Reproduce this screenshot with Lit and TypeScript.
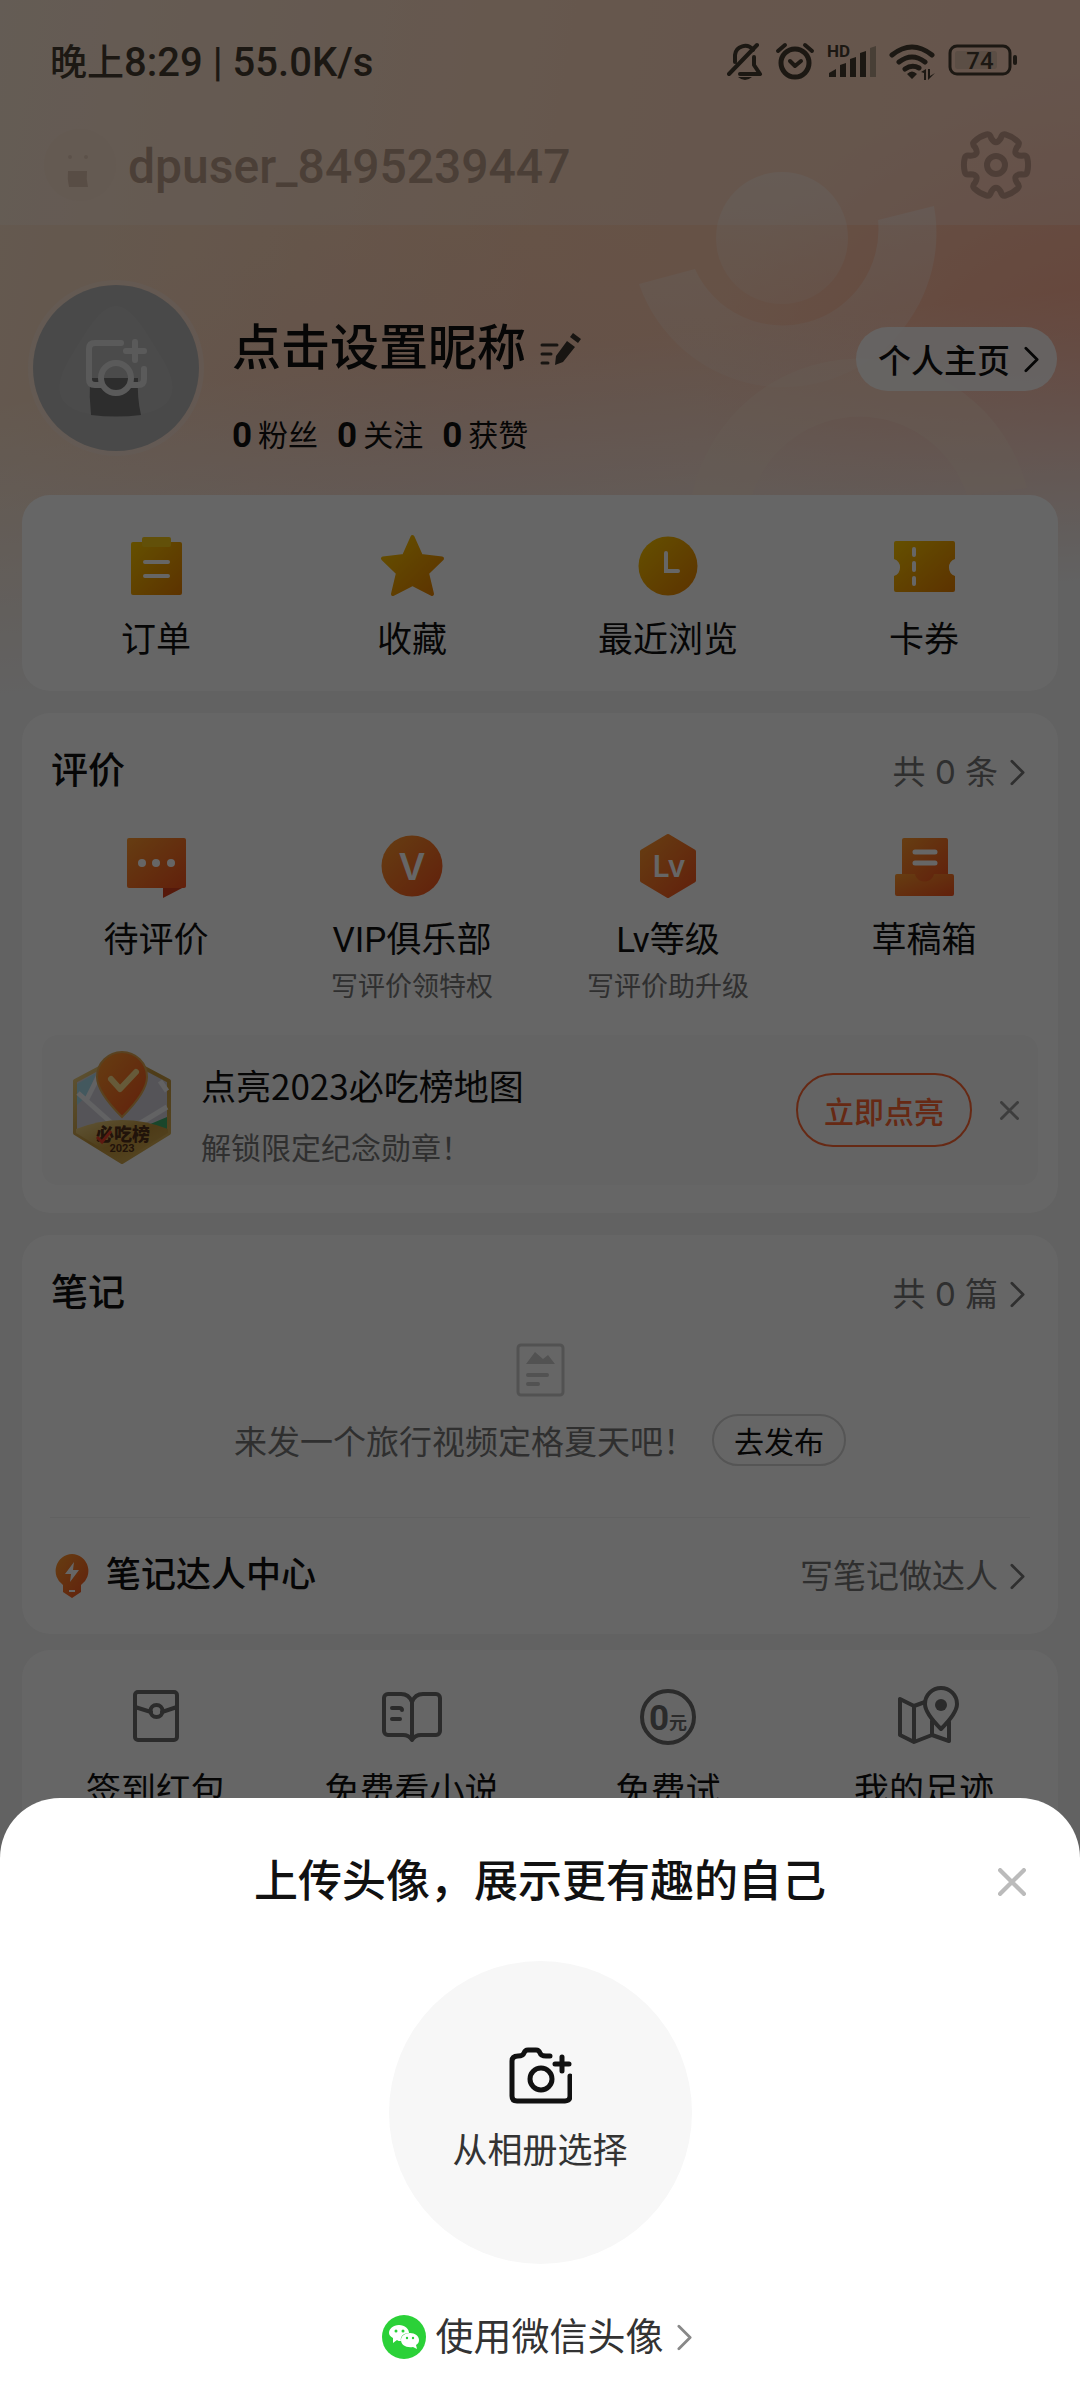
import { LitElement, html, svg, css, nothing } from "lit";
import type { TemplateResult, SVGTemplateResult } from "lit";
import { customElement, state } from "lit/decorators.js";

interface Entry {
  icon: SVGTemplateResult;
  label: string;
  note?: string;
}

const point = (radius: number, degrees: number): string => {
  const a = (degrees * Math.PI) / 180;
  return `${(36 + radius * Math.cos(a)).toFixed(2)} ${(36 + radius * Math.sin(a)).toFixed(2)}`;
};

/** Outline of a cog with six lobes, one every 60 degrees. */
const gearPath =
  [0, 60, 120, 180, 240, 300]
    .map(
      (a, i) =>
        `${i === 0 ? "M" : "L"}${point(32, a - 13)} Q${point(33, a)} ${point(32, a + 13)} ` +
        `Q${point(32, a + 19)} ${point(27, a + 20)} Q${point(19, a + 30)} ${point(27, a + 40)} ` +
        `Q${point(32, a + 41)} ${point(32, a + 47)}`,
    )
    .join(" ") + "Z";

const orders = svg`
  <rect x="7" y="8" width="51" height="53" rx="2" fill="url(#gold)"/>
  <rect x="18" y="3" width="29" height="10" rx="2" fill="#f5c818"/>
  <path d="M21 28h23M21 42h23" stroke="#fff" stroke-width="4" stroke-linecap="round"/>`;
const star = svg`
  <path d="M32.500 3 L41 22 L62 24.500 L47 39 L52 60 L32.500 50 L13 60 L18 39 L3 24.500 L24 22Z"
    fill="url(#gold)" stroke="url(#gold)" stroke-width="4" stroke-linejoin="round"/>`;
const clock = svg`
  <circle cx="32" cy="32" r="29.500" fill="url(#gold)"/>
  <path d="M30 19v18h12" fill="none" stroke="#fff" stroke-width="4" stroke-linecap="round"/>`;
const ticket = svg`
  <path d="M4 7H61a2 2 0 0 1 2 2V25a9 9 0 0 0 0 17V56a2 2 0 0 1-2 2H4a2 2 0 0 1-2-2V42a9 9 0 0 0 0-17V9a2 2 0 0 1 2-2Z" fill="url(#gold)"/>
  <path d="M22 15v6M22 29v7M22 44v6" stroke="#fff" stroke-width="4" stroke-linecap="round"/>`;
const comment = svg`
  <path d="M39 50V64L62 52Z" fill="#d8401c"/>
  <rect x="3" y="4" width="59" height="50" rx="2" fill="url(#flame)"/>
  <g fill="#fff"><circle cx="18" cy="29" r="4"/><circle cx="32" cy="29" r="4"/><circle cx="47" cy="29" r="4"/></g>`;
const vip = svg`
  <circle cx="32" cy="32" r="30.500" fill="url(#flame)"/>
  <text class="glyph" x="32" y="46" font-size="37" text-anchor="middle">V</text>`;
const level = svg`
  <path d="M32 2 L58 17.500V46.500L32 62 L6 46.500V17.500Z" fill="url(#flame)" stroke="url(#flame)" stroke-width="4" stroke-linejoin="round"/>
  <text class="glyph" x="33" y="43" font-size="30" text-anchor="middle">Lv</text>`;
const drafts = svg`
  <rect x="10" y="4" width="46" height="44" rx="2" fill="url(#flame)"/>
  <path d="M23 18h20M23 29h20" stroke="#fff" stroke-width="5" stroke-linecap="round"/>
  <path d="M5 40H23C25 50 40 50 42 40H60a2 2 0 0 1 2 2V60a2 2 0 0 1-2 2H5a2 2 0 0 1-2-2V42a2 2 0 0 1 2-2Z" fill="url(#flame)"/>`;

const envelope = svg`
  <g class="line"><rect x="11" y="7" width="42" height="48" rx="3"/>
  <path d="M11 22l16 5M53 22l-15 5"/><circle cx="32.500" cy="26" r="6"/></g>`;
const book = svg`
  <g class="line"><path d="M32 17Q29 9 21 9H8a4 4 0 0 0-4 4V46a4 4 0 0 0 4 4H23Q29 50 32 55Q35 50 41 50H56a4 4 0 0 0 4-4V13a4 4 0 0 0-4-4H43Q35 9 32 17V53"/>
  <path d="M12 23h7q3 0 3 2M12 34h8"/></g>`;
const zero = svg`
  <circle class="line" cx="32" cy="32" r="26"/>
  <text class="ink" x="13" y="45" font-size="35">0</text>
  <text class="ink" x="33" y="44" font-size="18">元</text>`;
const map = svg`
  <g class="line"><path d="M33 17L22 21L8 14V50L22 57L40 50L57 56V37M22 21V57M40 50V36"/>
  <path d="M49 44Q33 28 33 19a16 16 0 0 1 32 0Q65 28 49 44Z"/></g>
  <circle cx="49" cy="20" r="6" fill="#6b6b6b"/>`;

const shortcuts: Entry[] = [
  { icon: orders, label: "订单" },
  { icon: star, label: "收藏" },
  { icon: clock, label: "最近浏览" },
  { icon: ticket, label: "卡券" },
];
const reviews: Entry[] = [
  { icon: comment, label: "待评价" },
  { icon: vip, label: "VIP俱乐部", note: "写评价领特权" },
  { icon: level, label: "Lv等级", note: "写评价助升级" },
  { icon: drafts, label: "草稿箱" },
];
const services: Entry[] = [
  { icon: envelope, label: "签到红包" },
  { icon: book, label: "免费看小说" },
  { icon: zero, label: "免费试" },
  { icon: map, label: "我的足迹" },
];

const chevron = html`<svg class="chevron" viewBox="0 0 16 28" aria-hidden="true"><path d="M2 2l12 12-12 12"/></svg>`;
const cross = html`<svg class="cross" viewBox="0 0 26 26" aria-hidden="true"><path d="M2 2l22 22M24 2l-22 22"/></svg>`;

@customElement("app-root")
export class AppRoot extends LitElement {
  @state() private sheetOpen = true;
  @state() private promoOpen = true;

  static styles = css`
    :host {
      display: block;
      font-family: Roboto, "Noto Sans CJK SC", sans-serif;
      color: #111;
    }
    * { box-sizing: border-box; }
    a { color: inherit; text-decoration: none; }
    button { font: inherit; color: inherit; background: none; border: 0; padding: 0; margin: 0; cursor: pointer; }
    h1, h2, h3, p { margin: 0; font-weight: 400; }
    svg { display: block; flex: none; }
    .screen { position: relative; min-height: 100vh; overflow: hidden; }
    .page {
      min-height: 100vh;
      background:
        linear-gradient(174deg, rgba(244, 244, 244, 0) 400px, #f4f4f4 690px) no-repeat,
        radial-gradient(ellipse 420px 330px at 104% 400px, rgba(255, 160, 135, 0.75), rgba(255, 170, 145, 0)) no-repeat,
        radial-gradient(ellipse 480px 280px at 46% 470px, rgba(250, 200, 184, 0.7), rgba(250, 200, 184, 0)) no-repeat,
        linear-gradient(100deg, #fadfc8 0, #ffd0b0 48%, #ffc6ac 100%) no-repeat,
        #f4f4f4;
      background-size: 100% 760px, 100% 760px, 100% 760px, 100% 720px, auto;
    }
    .figure { position: absolute; top: 0; right: 0; width: 480px; height: 495px; }

    .status {
      position: absolute;
      top: 0;
      left: 0;
      right: 0;
      z-index: 2;
      display: flex;
      align-items: center;
      justify-content: space-between;
      height: 120px;
      padding: 0 62px 0 50px;
      font-size: 40px;
      font-weight: 500;
      color: #1c1813;
    }
    .status-cn { font-size: 37px; }
    .status-icons { display: flex; align-items: center; gap: 12px; }
    .status-icons svg { height: 40px; fill: none; stroke: #1c1813; stroke-width: 5; stroke-linecap: round; stroke-linejoin: round; }
    .status-icons text, .status-icons .solid { fill: #1c1813; stroke: none; }
    .status-icons .faint { fill: #483f36; stroke: none; }
    .status-icons .charge { fill: #5b4e45; stroke: none; }
    .bar { position: relative; display: flex; align-items: center; gap: 12px; height: 225px; padding: 122px 46px 17px 44px; background: rgba(255, 255, 255, 0.22); color: #bb9e8a; }
    .bar-name { flex: 1; padding-top: 3px; font-size: 48px; font-weight: 500; line-height: 60px; }

    .profile { position: relative; display: flex; align-items: center; padding: 55px 23px 39px 28px; }
    .avatar { width: 176px; height: 176px; margin-right: 28px; }
    .who { flex: 1; display: flex; flex-direction: column; gap: 31px; padding-top: 33px; }
    .nick { display: flex; align-items: center; gap: 14px; }
    .nick h1 { font-size: 49px; font-weight: 500; line-height: 72px; }
    .stats { display: flex; gap: 19px; font-size: 30px; line-height: 40px; }
    .stats span { display: flex; align-items: center; gap: 6px; }
    .stats b { font-size: 35px; }
    .home {
      display: flex;
      align-items: center;
      gap: 14px;
      height: 64px;
      margin-bottom: 18px;
      padding: 0 18px 0 22px;
      border-radius: 32px;
      background: rgba(255, 255, 255, 0.85);
      font-size: 33px;
      font-weight: 500;
    }

    .card { position: relative; margin: 0 22px 22px; border-radius: 28px; background: #fff; }
    .grid { display: grid; grid-template-columns: repeat(4, 1fr); padding: 0 6px; }
    .tile { display: flex; flex-direction: column; align-items: center; font-size: 35px; line-height: 44px; text-align: center; }
    .tile svg { width: 64px; height: 64px; margin-bottom: 21px; overflow: visible; }
    .tile small { margin-top: 6px; font-size: 27px; line-height: 36px; color: #777; }
    .shortcuts { padding: 39px 0 28px; }
    .reviews { padding: 29px 0 28px; }
    .notes { padding: 29px 0 0; margin-bottom: 16px; }
    .services { padding: 35px 0 60px; margin-bottom: 0; }
    .line { fill: none; stroke: #6b6b6b; stroke-width: 4; stroke-linecap: round; stroke-linejoin: round; }
    .glyph { fill: #fff; font-weight: 600; font-family: Inter, sans-serif; }
    .ink { fill: #6b6b6b; font-weight: 700; }

    .head { display: flex; align-items: center; justify-content: space-between; padding: 0 33px 0 29px; }
    .head h2 { font-size: 37px; font-weight: 500; line-height: 60px; }
    .more { display: flex; align-items: center; gap: 12px; font-family: Inter, "Noto Sans CJK SC", sans-serif; font-size: 33px; line-height: 48px; color: #777; }
    .reviews .grid { margin-top: 32px; }
    .chevron { width: 15px; height: 27px; fill: none; stroke: currentColor; stroke-width: 3; stroke-linecap: round; stroke-linejoin: round; }
    .cross { fill: none; stroke: currentColor; stroke-width: 4; stroke-linecap: round; }

    .promo { display: flex; align-items: center; height: 150px; margin: 30px 20px 0; padding: 0 19px 0 30px; border-radius: 16px; background: #fafafa; }
    .badge { width: 102px; height: 118px; margin-right: 27px; overflow: visible; }
    .badge .mark { fill: #54301a; font-size: 18px; font-weight: 900; }
    .badge .year { fill: #54301a; font-size: 11px; font-weight: 700; }
    .promo-text { flex: 1; padding-top: 12px; }
    .promo-text h3 { font-family: "Noto Sans CJK SC", sans-serif; font-size: 35px; line-height: 48px; }
    .promo-text p { margin-top: 18px; font-size: 30px; line-height: 44px; color: #777; }
    .light { height: 74px; padding: 0 26px; border: 2px solid #ff6633; border-radius: 37px; font-size: 30px; font-weight: 500; color: #ff6633; }
    .dismiss { margin-left: 28px; color: #999; }
    .dismiss .cross { width: 19px; height: 19px; }

    .empty { display: flex; flex-direction: column; align-items: center; padding: 14px 0 51px; }
    .empty svg { width: 64px; height: 64px; }
    .empty-row { display: flex; align-items: center; gap: 16px; margin-top: 12px; font-size: 33px; color: #777; }
    .publish { height: 52px; padding: 0 20px; border: 2px solid #d4d4d4; border-radius: 26px; font-size: 30px; color: #111; }
    .expert { display: flex; align-items: center; height: 117px; margin: 0 28px; padding: 0 5px 0 4px; border-top: 1px solid #f2f2f2; }
    .expert h3 { flex: 1; margin-left: 16px; font-size: 35px; font-weight: 500; line-height: 60px; }

    .scrim { position: absolute; inset: 0; z-index: 1; display: flex; flex-direction: column; justify-content: flex-end; background: rgba(0, 0, 0, 0.6); }
    .sheet { display: flex; flex-direction: column; align-items: center; padding: 52px 0 33px; border-radius: 60px 60px 0 0; background: #fff; }
    .sheet-head { display: grid; grid-template-columns: 1fr auto 1fr; align-items: center; align-self: stretch; padding: 0 54px; }
    .sheet-head h2 { grid-column: 2; font-size: 44px; font-weight: 500; line-height: 64px; }
    .close { justify-self: end; color: #bbb; }
    .close .cross { width: 28px; height: 28px; }
    .album {
      display: flex;
      flex-direction: column;
      align-items: center;
      justify-content: center;
      gap: 21px;
      width: 303px;
      height: 303px;
      margin: 47px 0 43px;
      border-radius: 50%;
      background: #f7f7f7;
      font-size: 35px;
      line-height: 52px;
      color: #333;
    }
    .wechat { display: flex; align-items: center; padding-right: 6px; font-size: 38px; line-height: 60px; color: #333; }
    .wechat svg:first-child { margin-right: 9px; }
    .wechat .chevron { margin-left: 13px; color: #888; }
  `;

  private tiles(entries: Entry[]): TemplateResult {
    return html`<nav class="grid">
      ${entries.map(
        (e) => html`<a class="tile" href="#"
          ><svg viewBox="0 0 64 64" aria-hidden="true">${e.icon}</svg>${e.label}${e.note ? html`<small>${e.note}</small>` : nothing}</a>`,
      )}
    </nav>`;
  }

  private statusBar(): TemplateResult {
    return html`<div class="status">
      <span><span class="status-cn">晚上</span>8:29 | 55.0K/s</span>
      <div class="status-icons">
        <svg width="36" viewBox="0 0 36 40" aria-hidden="true">
          <path d="M8 22V15a10 10 0 0 1 18-5M27 17v8l6 9H13M2 34L30 5" stroke-width="4"/>
          <path class="solid" d="M11 37H25Q18 43 11 37Z"/>
        </svg>
        <svg width="40" viewBox="0 0 40 40" aria-hidden="true">
          <circle cx="20" cy="23" r="14"/><path d="M15 21l5 5 6-5M3 11l7-6M37 11l-7-6" stroke-width="4"/>
        </svg>
        <svg width="50" viewBox="0 0 50 40" aria-hidden="true">
          <text x="0" y="17" font-size="17" font-weight="700">HD</text>
          <path class="solid" d="M2 37v-4l7-4v8ZM13 37V25l6-2V37ZM23 37V19l6-2V37ZM33 37V13l6-2V37Z"/>
          <path class="faint" d="M43 37V8l6-2V37Z"/>
        </svg>
        <svg width="47" viewBox="0 0 47 40" aria-hidden="true">
          <path d="M3 15Q23 -1 43 15M10 22Q23 12 36 22M16 29Q23 24 30 28"/>
          <path class="solid" d="M18 34Q23 29 28 34L23 39ZM32 32l5-3v11h-2v-7zM39 29h2v7l5-3-7 7z"/>
        </svg>
        <svg width="70" viewBox="0 0 70 40" aria-hidden="true">
          <rect x="2" y="6" width="60" height="28" rx="7" stroke-width="3"/>
          <path d="M67 17v6" stroke-width="4"/>
          <rect class="charge" x="7" y="11" width="42" height="18" rx="3"/>
          <text x="32" y="29" font-size="24" text-anchor="middle">74</text>
        </svg>
      </div>
    </div>`;
  }

  private header(): TemplateResult {
    return html`
      <svg class="figure" viewBox="600 0 480 495" aria-hidden="true">
        <defs>
          <linearGradient id="gold" x1="0" y1="0" x2="1" y2="1"><stop offset="0" stop-color="#fcc800"/><stop offset="1" stop-color="#e67e00"/></linearGradient>
          <linearGradient id="flame" x1="0" y1="0" x2="1" y2="1"><stop offset="0" stop-color="#ff9a2e"/><stop offset="1" stop-color="#f4511e"/></linearGradient>
          <linearGradient id="fade" x1="0" y1="0" x2="0" y2="1"><stop offset="0" stop-color="#fffaf4" stop-opacity=".38"/><stop offset="1" stop-color="#fffaf4" stop-opacity=".14"/></linearGradient>
        </defs>
        <circle cx="782" cy="238" r="66" fill="url(#fade)"/>
        <path d="M934 206A154 154 0 0 1 757 385A154 154 0 0 1 639 284L695 269A96 96 0 0 0 878 220Z" fill="url(#fade)"/>
        <path d="M692 495A172 172 0 0 1 1027 488L967 495A113 113 0 0 0 752 495Z" fill="#ffe6d2" fill-opacity=".4"/>
      </svg>
      <header class="bar">
        <svg width="72" height="72" viewBox="0 0 72 72" aria-hidden="true">
          <circle cx="36" cy="36" r="36" fill="#fadfca" opacity=".6"/>
          <circle cx="26" cy="28" r="2" fill="#e6cbb8"/><circle cx="42" cy="28" r="2" fill="#e6cbb8"/>
          <path d="M24 42H43q-1 8 1 16H25Q23 50 24 42Z" fill="#dcc0ac"/>
        </svg>
        <span class="bar-name">dpuser_8495239447</span>
        <button type="button" aria-label="设置">
          <svg width="76" height="76" viewBox="-2 -2 76 76" fill="none" stroke="#c29c8b" stroke-width="6" stroke-linejoin="round" aria-hidden="true">
            <path d=${gearPath}/><circle cx="36" cy="36" r="9"/>
          </svg>
        </button>
      </header>`;
  }

  private profile(): TemplateResult {
    return html`<section class="profile">
      <svg class="avatar" viewBox="0 0 176 176" aria-hidden="true">
        <circle cx="88" cy="88" r="88" fill="#f6e6e0" fill-opacity=".42"/>
        <circle cx="88" cy="88" r="83" fill="#b6b6b6"/>
        <path d="M88 26C104 26 118 52 134 78C158 118 140 136 88 136C36 136 18 118 42 78C58 52 72 26 88 26Z" fill="#bcbcbc"/>
        <path d="M62 98H110q-1 20 3 37-25 3-50 0-2-18-1-37Z" fill="#707070"/>
        <g fill="none" stroke="#e2e2e2" stroke-width="6" stroke-linecap="round" stroke-linejoin="round">
          <path d="M93 63H67q-6 0-6 6V99q0 6 6 6h6M116 89v10q0 6-6 6h-7M107 62v18M98 71h18"/>
          <circle cx="88" cy="98" r="15"/>
        </g>
      </svg>
      <div class="who">
        <div class="nick">
          <h1>点击设置昵称</h1>
          <svg width="42" height="34" viewBox="0 0 42 34" aria-hidden="true">
            <path d="M2 13h15M2 22h9M2 31h6" stroke="#3c362f" stroke-width="3" stroke-linecap="round"/>
            <path d="M27 9l8 6-12 15-8 3 1-9ZM30 5l3-4 8 6-3 4Z" fill="#3c362f"/>
          </svg>
        </div>
        <div class="stats">
          <span><b>0</b>粉丝</span><span><b>0</b>关注</span><span><b>0</b>获赞</span>
        </div>
      </div>
      <a class="home" href="#">个人主页 ${chevron}</a>
    </section>`;
  }

  private promo(): TemplateResult {
    return html`<div class="promo">
      <svg class="badge" viewBox="0 0 102 118" aria-hidden="true">
        <defs>
          <linearGradient id="rim" x1="0" y1="0" x2="1" y2="1"><stop offset="0" stop-color="#f0d68a"/><stop offset=".5" stop-color="#c2953c"/><stop offset="1" stop-color="#d9b45c"/></linearGradient>
        </defs>
        <path d="M50 5L97 30V82L50 111L3 82V30Z" fill="#d5d3dd" stroke="url(#rim)" stroke-width="4" stroke-linejoin="round"/>
        <path d="M5 33L24 22L16 44L5 54Z" fill="#a8dcea"/>
        <path d="M6 42L44 76M28 22L14 50M95 56L62 76M88 30L95 40" stroke="#f4f4f8" stroke-width="5"/>
        <path d="M95 66V80L76 74Z" fill="#3fae6c"/>
        <path d="M4 78Q50 60 96 78V82L50 110L4 82Z" fill="url(#rim)"/>
        <path d="M50 66Q25 41 25 26a25 25 0 0 1 50 0Q75 41 50 66Z" fill="url(#flame)" stroke="#e0a650" stroke-width="2"/>
        <path d="M39 28l9 10 16-17" fill="none" stroke="#ffe08e" stroke-width="6" stroke-linecap="round" stroke-linejoin="round"/>
        <text class="mark" x="51" y="90" text-anchor="middle">必吃榜</text>
        <path d="M25 86l5 5 9-11" fill="none" stroke="#e8402a" stroke-width="3"/>
        <text class="year" x="50" y="101" text-anchor="middle">2023</text>
      </svg>
      <div class="promo-text">
        <h3>点亮2023必吃榜地图</h3>
        <p>解锁限定纪念勋章！</p>
      </div>
      <button class="light" type="button">立即点亮</button>
      <button class="dismiss" type="button" aria-label="关闭" @click=${() => (this.promoOpen = false)}>${cross}</button>
    </div>`;
  }

  private sheet(): TemplateResult {
    return html`<div class="scrim">
      <section class="sheet" role="dialog" aria-labelledby="sheet-title">
        <div class="sheet-head">
          <h2 id="sheet-title">上传头像，展示更有趣的自己</h2>
          <button class="close" type="button" aria-label="关闭" @click=${() => (this.sheetOpen = false)}>${cross}</button>
        </div>
        <button class="album" type="button">
          <svg width="64" height="58" viewBox="0 0 64 58" fill="none" stroke="#111" stroke-width="5" stroke-linecap="round" stroke-linejoin="round" aria-hidden="true">
            <path d="M42 9H38q-5 0-6-3-1-3-4-3H20q-3 0-4 3-1 3-6 3-6 0-6 5V49q0 5 5 5H57q5 0 5-5V29M54 10v14M47 17h14"/>
            <circle cx="33" cy="32" r="11"/>
          </svg>
          从相册选择
        </button>
        <a class="wechat" href="#">
          <svg width="44" height="44" viewBox="0 0 44 44" aria-hidden="true">
            <circle cx="22" cy="22" r="22" fill="#2bd138"/>
            <path d="M17 10c6 0 10 4 10 8-6 0-9 4-8 8-2 0-3 0-4-1l-4 3 0-5c-3-2-4-3-4-5 0-4 4-8 10-8Z" fill="#fff"/>
            <path d="M28 18c5 0 9 3 9 7 0 2-1 4-3 5l1 4-4-2c-7 1-12-2-12-7 0-4 4-7 9-7Z" fill="#fff"/>
            <g fill="#2bd138"><circle cx="14" cy="16" r="1.500"/><circle cx="21" cy="16" r="1.500"/><circle cx="25" cy="23" r="1.200"/><circle cx="31" cy="23" r="1.200"/></g>
          </svg>使用微信头像${chevron}
        </a>
      </section>
    </div>`;
  }

  render() {
    return html`<div class="screen">
      <main class="page">
        ${this.header()} ${this.profile()}
        <section class="card shortcuts">${this.tiles(shortcuts)}</section>
        <section class="card reviews">
          <div class="head"><h2>评价</h2><a class="more" href="#">共 0 条${chevron}</a></div>
          ${this.tiles(reviews)} ${this.promoOpen ? this.promo() : nothing}
        </section>
        <section class="card notes">
          <div class="head"><h2>笔记</h2><a class="more" href="#">共 0 篇${chevron}</a></div>
          <div class="empty">
            <svg viewBox="0 0 64 64" aria-hidden="true">
              <rect x="10" y="7" width="45" height="50" rx="3" fill="none" stroke="#ccc" stroke-width="3"/>
              <path d="M18 26l9-12 8 7 5-4 7 9Z" fill="#ccc"/>
              <path d="M20 37h19M20 46h10" stroke="#ccc" stroke-width="4" stroke-linecap="round"/>
            </svg>
            <div class="empty-row">来发一个旅行视频定格夏天吧！<button class="publish" type="button">去发布</button></div>
          </div>
          <div class="expert">
            <svg width="36" height="46" viewBox="0 0 36 46" aria-hidden="true">
              <path d="M18 1a17 17 0 0 1 9 31v7l-9 6-9-6v-7a17 17 0 0 1 9-31Z" fill="url(#flame)"/>
              <path d="M20 9L11 21h6l-1 8 9-12h-6Z" fill="#fff"/><path d="M15 38h6" stroke="#fff" stroke-width="2"/>
            </svg>
            <h3>笔记达人中心</h3>
            <a class="more" href="#">写笔记做达人${chevron}</a>
          </div>
        </section>
        <section class="card services">${this.tiles(services)}</section>
      </main>
      ${this.sheetOpen ? this.sheet() : nothing} ${this.statusBar()}
    </div>`;
  }
}
